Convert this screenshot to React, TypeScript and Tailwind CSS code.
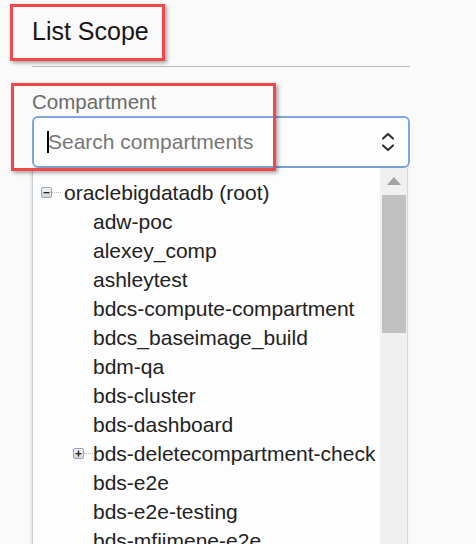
const children = [
  "adw-poc",
  "alexey_comp",
  "ashleytest",
  "bdcs-compute-compartment",
  "bdcs_baseimage_build",
  "bdm-qa",
  "bds-cluster",
  "bds-dashboard",
  "bds-deletecompartment-check",
  "bds-e2e",
  "bds-e2e-testing",
  "bds-mfiimene-e2e",
];

const expandable = new Set(["bds-deletecompartment-check"]);

function TreeToggle({ open }: { open: boolean }) {
  return (
    <span className="flex items-center">
      <span className="w-[11px] h-[11px] border border-[#8fa6c4] rounded-[2px] bg-gradient-to-b from-[#f4f4f4] to-[#d6d6d6] flex items-center justify-center">
        <svg width="7" height="7" viewBox="0 0 7 7">
          <rect x="0.5" y="3" width="6" height="1.3" fill="#222" />
          {!open && <rect x="2.85" y="0.5" width="1.3" height="6" fill="#222" />}
        </svg>
      </span>
      <span className="w-[9px] border-t border-dotted border-[#b8b8b8]" />
    </span>
  );
}

export default function App() {
  return (
    <div
      className="relative w-[476px] h-[544px] overflow-hidden bg-[#fafafa] pl-[32px]"
      style={{ fontFamily: '"Liberation Sans", Arial, sans-serif' }}
    >
      <div className="w-[378px]">
        <div className="pt-[17px] h-[44px] text-[25px] leading-[28px] text-[#161616]">List Scope</div>
        <div className="mt-[22px] border-t border-[#b4bcc6]" />

        <div className="mt-[24px] text-[20.5px] leading-[22px] text-[#6b6b6b]">Compartment</div>

        <div className="mt-[3px] h-[52px] border-2 border-[#7ea7dd] rounded-[6px] bg-[#fdfdfd] flex items-center pl-[13px] pr-[12px]">
          <span className="w-[2px] h-[22px] bg-black" />
          <span className="text-[21px] text-[#777] flex-1 -ml-[1px]">Search compartments</span>
          <svg width="16" height="22" viewBox="0 0 16 22" fill="none" stroke="#333" strokeWidth="2.2" strokeLinecap="round" strokeLinejoin="round">
            <path d="M3 7.5 L8 3 L13 7.5" />
            <path d="M3 14.5 L8 19 L13 14.5" />
          </svg>
        </div>

        <div className="w-[376px] h-[400px] flex bg-[#fdfdfd] border-l border-[#c7ccd3] shadow-[-1px_0_3px_rgba(0,0,0,0.12)]">
          <div className="flex-1 min-w-0 pt-[10px] text-[21px] text-[#222] whitespace-nowrap">
            <div className="h-[29px] flex items-center pl-[8px]">
              <TreeToggle open />
              <span className="ml-[3px]">oraclebigdatadb (root)</span>
            </div>
            {children.map((c) => (
              <div key={c} className="h-[29px] flex items-center">
                {expandable.has(c) ? (
                  <span className="pl-[40px] flex items-center">
                    <TreeToggle open={false} />
                    <span>{c}</span>
                  </span>
                ) : (
                  <span className="pl-[60px]">{c}</span>
                )}
              </div>
            ))}
          </div>
          <div className="w-[28px] shrink-0 bg-[#f0f0f0] border-r border-[#d4d8de] flex flex-col items-center pt-[9px]">
            <svg width="14" height="8" viewBox="0 0 14 8">
              <path d="M0 8 L7 0 L14 8 Z" fill="#a3a3a3" />
            </svg>
            <div className="mt-[10px] w-[24px] h-[138px] bg-[#c1c1c1]" />
          </div>
        </div>
      </div>

      <div className="absolute left-[10px] top-[4px] w-[155px] h-[57px] border-[3px] border-[#f4474a] shadow-[2px_2px_4px_rgba(0,0,0,0.35)]" />
      <div className="absolute left-[11px] top-[83px] w-[265px] h-[88px] border-[3px] border-[#f4474a] shadow-[2px_2px_4px_rgba(0,0,0,0.35)]" />
    </div>
  );
}
